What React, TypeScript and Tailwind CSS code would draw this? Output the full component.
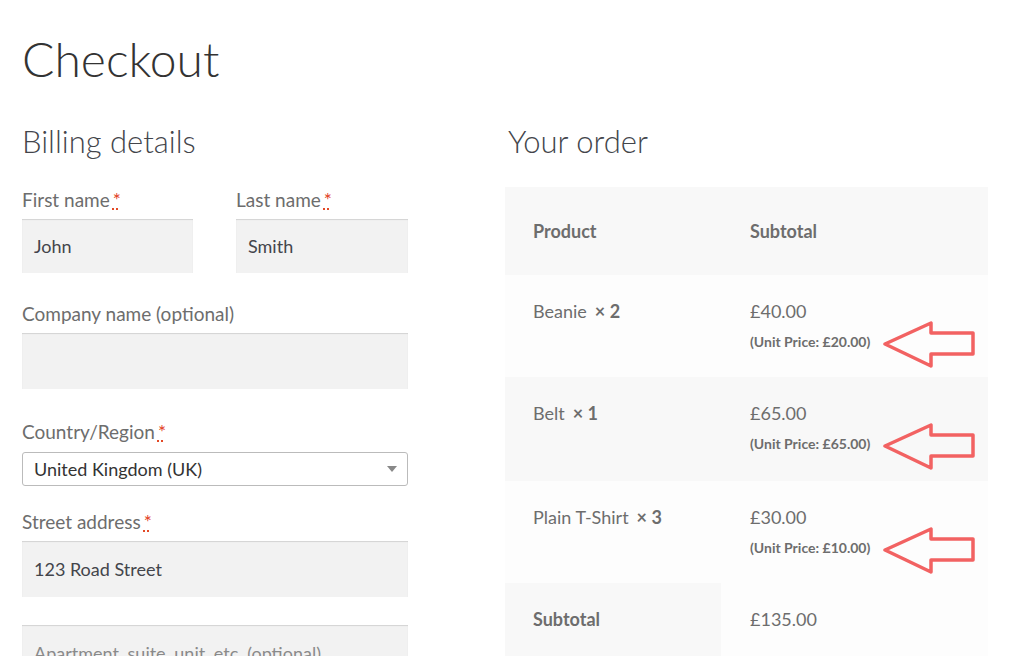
import React from 'react'

const font = { fontFamily: 'Lato, "Noto Sans", sans-serif' }

function Req() {
  return (
    <span className="ml-[3px] text-[#e2401c] underline decoration-dotted decoration-[#e2401c] underline-offset-2">*</span>
  )
}

function Label({ children, required }: { children: React.ReactNode; required?: boolean }) {
  return (
    <label className="block h-[26px] mb-[6px] text-[19px] leading-[26px] text-[#6d6d6d]">
      {children}
      {required && <Req />}
    </label>
  )
}

function TextInput({ value, placeholder, h = 'h-[56px]' }: { value?: string; placeholder?: string; h?: string }) {
  return (
    <div
      className={`${h} flex items-center px-[12px] bg-[#f2f2f2] shadow-[inset_0_1px_1px_rgba(0,0,0,0.13)] text-[18px] ${
        value ? 'text-[#43454b]' : 'text-[#8a8a8a]'
      }`}
    >
      {value || placeholder}
    </div>
  )
}

function Arrow() {
  return (
    <svg className="absolute left-[377px] top-[46px]" width="94" height="48" viewBox="0 0 94 48" fill="none">
      <path
        d="M3 23 L49 2 L49 12 L91 12 L91 33 L49 33 L49 45 Z"
        stroke="#f26262"
        strokeWidth="3.5"
        strokeLinejoin="round"
      />
    </svg>
  )
}

const items = [
  { name: 'Beanie', qty: 2, total: '£40.00', unit: '£20.00', bg: 'bg-[#fdfdfd]', h: 'h-[102px]' },
  { name: 'Belt', qty: 1, total: '£65.00', unit: '£65.00', bg: 'bg-[#f8f8f8]', h: 'h-[104px]' },
  { name: 'Plain T-Shirt', qty: 3, total: '£30.00', unit: '£10.00', bg: 'bg-[#fdfdfd]', h: 'h-[102px]' },
]

export default function App() {
  return (
    <div className="w-[1024px] h-[656px] overflow-hidden bg-white pl-[22px]" style={font}>
      <h1 className="pt-[24px] h-[105px] text-[48px] leading-[70px] font-light text-[#333333]">Checkout</h1>

      <div className="flex gap-[97px]">
        {/* billing */}
        <div className="w-[386px]">
          <h3 className="h-[82px] pt-[16px] text-[31px] leading-[40px] font-light text-[#43454b]">Billing details</h3>

          <div className="flex justify-between mb-[28px]">
            <div className="w-[171px]">
              <Label required>First name</Label>
              <TextInput value="John" h="h-[54px]" />
            </div>
            <div className="w-[172px]">
              <Label required>Last name</Label>
              <TextInput value="Smith" h="h-[54px]" />
            </div>
          </div>

          <div className="mb-[30px]">
            <Label>Company name (optional)</Label>
            <TextInput />
          </div>

          <div className="mb-[23px]">
            <label className="block h-[26px] mb-[7px] text-[19px] leading-[26px] text-[#6d6d6d]">
              Country/Region
              <Req />
            </label>
            <div className="h-[34px] flex items-center justify-between pl-[11px] pr-[10px] border border-[#bbbbbb] rounded-[3px] bg-white text-[18px] text-[#333333]">
              <span>United Kingdom (UK)</span>
              <span className="w-0 h-0 border-l-[5px] border-r-[5px] border-t-[6px] border-l-transparent border-r-transparent border-t-[#888888]" />
            </div>
          </div>

          <div className="mb-[28px]">
            <Label required>Street address</Label>
            <TextInput value="123 Road Street" />
          </div>

          <TextInput placeholder="Apartment, suite, unit, etc. (optional)" />
        </div>

        {/* order */}
        <div className="w-[483px]">
          <h3 className="h-[82px] pt-[16px] pl-[3px] text-[31px] leading-[40px] font-light text-[#43454b]">Your order</h3>

          <div className="text-[18px] text-[#6d6d6d]">
            <div className="grid grid-cols-[216px_1fr] h-[88px] items-center bg-[#f8f8f8] font-bold">
              <div className="pl-[28px]">Product</div>
              <div className="pl-[29px]">Subtotal</div>
            </div>

            {items.map(it => (
              <div key={it.name} className={`relative grid grid-cols-[216px_1fr] ${it.h} ${it.bg} pt-[23px]`}>
                <div className="pl-[28px] leading-[26px]">
                  {it.name}
                  <strong className="ml-[8px] font-bold">× {it.qty}</strong>
                </div>
                <div className="pl-[29px]">
                  <div className="leading-[26px]">{it.total}</div>
                  <div className="mt-[9px] text-[14px] leading-[18px] font-bold">(Unit Price: {it.unit})</div>
                </div>
                <Arrow />
              </div>
            ))}

            <div className="grid grid-cols-[216px_1fr] h-[80px]">
              <div className="pl-[28px] pt-[23px] leading-[26px] bg-[#f8f8f8] font-bold">Subtotal</div>
              <div className="pl-[29px] pt-[23px] leading-[26px] bg-[#fdfdfd]">£135.00</div>
            </div>
          </div>
        </div>
      </div>
    </div>
  )
}
